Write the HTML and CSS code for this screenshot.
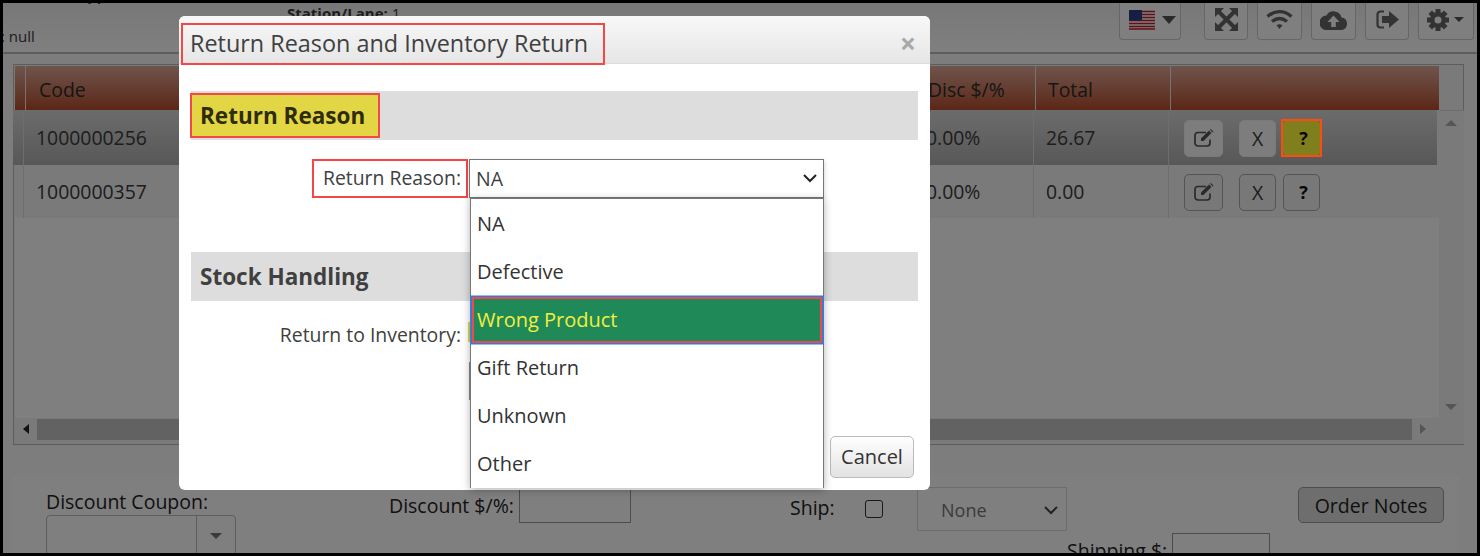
FILE: index.html
```html
<!DOCTYPE html>
<html>
<head>
    <title>Return Reason</title>
    <link rel="stylesheet" href="styles.css">
</head>
<body>
<div class="frame">
    <div class="topbar">
        <div class="top-left">
            <div class="top-clip">Cashier: pp</div>
            <div class="top-null">: null</div>
        </div>
        <div class="station"><b>Station/Lane:</b> 1</div>
        <div class="tools">
            <button class="tool tool-flag">
                <svg width="26" height="20" viewBox="0 0 26 20">
                    <rect width="26" height="20" fill="#fff"/>
                    <path d="M0 1.5h26M0 4.5h26M0 7.5h26M0 10.5h26M0 13.5h26M0 16.5h26M0 19h26" stroke="#c4202c" stroke-width="1.6"/>
                    <rect width="13" height="10.5" fill="#2a3f8c"/>
                </svg>
                <span class="caret"></span>
            </button>
            <button class="tool tool-expand">
                <svg width="23" height="23" viewBox="0 0 23 23" fill="#666">
                    <path d="M0 0h9L0 9zM23 0v9L14 0zM0 23v-9l9 9zM23 23h-9l9-9z"/>
                    <path d="M4 4l15 15M19 4L4 19" stroke="#666" stroke-width="4"/>
                </svg>
            </button>
            <button class="tool tool-wifi">
                <svg width="27" height="21" viewBox="0 0 27 21" fill="none" stroke="#666" stroke-width="3.4">
                    <path d="M1.5 7.5C9 1 18 1 25.5 7.5"/>
                    <path d="M6 12.5C11 8.5 16 8.5 21 12.5"/>
                    <path d="M10.5 16.2C12.5 14.8 14.5 14.8 16.5 16.2L13.5 20z" fill="#666" stroke="none"/>
                </svg>
            </button>
            <button class="tool tool-cloud">
                <svg width="27" height="20" viewBox="0 0 27 20">
                    <path d="M21.5 7.5A8 7.5 0 0 0 6.5 5.5 6 6.5 0 0 0 6 20h15.5a5.5 6.2 0 0 0 0-12.5z" fill="#666"/>
                    <path d="M13.5 5.5l6 6.500h-3.700v5h-4.600v-5H7.500z" fill="#fff"/>
                </svg>
            </button>
            <button class="tool tool-exit">
                <svg width="23" height="19" viewBox="0 0 23 19">
                    <path d="M8 1.500H4.500A3 3 0 0 0 1.500 4.500v10a3 3 0 0 0 3 3H8" fill="none" stroke="#666" stroke-width="2.200"/>
                    <path d="M13 1l10 8.500-10 8.500v-5H6V6h7z" fill="#666"/>
                </svg>
            </button>
            <button class="tool tool-gear">
                <svg width="22" height="22" viewBox="0 0 22 22">
                    <g fill="#666">
                        <rect x="8.500" y="0" width="5" height="22"/>
                        <rect x="8.500" y="0" width="5" height="22" transform="rotate(45 11 11)"/>
                        <rect x="8.500" y="0" width="5" height="22" transform="rotate(90 11 11)"/>
                        <rect x="8.500" y="0" width="5" height="22" transform="rotate(135 11 11)"/>
                    </g>
                    <circle cx="11" cy="11" r="6" fill="none" stroke="#666" stroke-width="4"/>
                    <circle cx="11" cy="11" r="3.500" fill="#fff"/>
                </svg>
                <span class="caret caret-small"></span>
            </button>
        </div>
    </div>

    <div class="grid-panel">
        <div class="grid-main">
            <div class="head-row">
                <div></div>
                <div>Code</div>
                <div>Disc $/%</div>
                <div>Total</div>
                <div></div>
            </div>
            <div class="row row-active">
                <div></div>
                <div>1000000256</div>
                <div>0.00%</div>
                <div>26.67</div>
                <div class="row-actions">
                    <button class="act act-plain act-edit">
                        <svg width="20" height="18" viewBox="0 0 20 18"><use href="#edit-icon"/></svg>
                    </button>
                    <button class="act act-plain act-x">X</button>
                    <button class="act act-q act-q-on">?</button>
                </div>
            </div>
            <div class="row">
                <div></div>
                <div>1000000357</div>
                <div>0.00%</div>
                <div>0.00</div>
                <div class="row-actions">
                    <button class="act act-edit">
                        <svg width="20" height="18" viewBox="0 0 20 18"><use href="#edit-icon"/></svg>
                    </button>
                    <button class="act act-x">X</button>
                    <button class="act act-q">?</button>
                </div>
            </div>
            <div class="grid-empty"></div>
        </div>
        <div class="vscroll">
            <span class="arrow arrow-up"></span>
            <span class="arrow arrow-down"></span>
        </div>
        <div class="hscroll">
            <span class="arrow arrow-left"></span>
            <div class="hthumb"></div>
            <span class="arrow arrow-right"></span>
        </div>
    </div>

    <div class="bottom-panel">
        <div class="coupon">
            <div>Discount Coupon:</div>
            <div class="combo"><span class="combo-btn"><span class="arrow arrow-down"></span></span></div>
        </div>
        <div class="discount">
            <label>Discount $/%:</label>
            <div class="text-box discount-box"></div>
        </div>
        <div class="ship">
            <label>Ship:</label>
            <span class="check"></span>
        </div>
        <div class="ship-select">
            None
            <svg width="14" height="9" viewBox="0 0 14 9" fill="none" stroke="#444" stroke-width="2"><path d="M1 1l6 6 6-6"/></svg>
        </div>
        <button class="notes-btn">Order Notes</button>
        <div class="shipping">
            <label>Shipping $:</label>
            <div class="text-box shipping-box"></div>
        </div>
    </div>

    <div class="backdrop"></div>
    <div class="mark-q"></div>

    <div class="modal">
        <div class="modal-head">
            <h3 class="modal-title">Return Reason and Inventory Return</h3>
            <span class="modal-close">×</span>
        </div>
        <div class="section-bar section-first"><span class="section-mark">Return Reason</span></div>
        <div class="form-row reason-row">
            <label class="form-label form-label-mark">Return Reason:</label>
            <div class="select-wrap">
                <div class="select-box">
                    NA
                    <svg width="14" height="9" viewBox="0 0 14 9" fill="none" stroke="#222" stroke-width="2"><path d="M1 1l6 6 6-6"/></svg>
                </div>
                <ul class="dropdown">
                    <li>NA</li>
                    <li>Defective</li>
                    <li class="picked">Wrong Product</li>
                    <li>Gift Return</li>
                    <li>Unknown</li>
                    <li>Other</li>
                </ul>
            </div>
        </div>
        <div class="section-bar section-stock"><span class="section-text">Stock Handling</span></div>
        <div class="form-row inventory-row">
            <label class="form-label">Return to Inventory:</label>
            <span class="inv-check"></span>
        </div>
        <div class="inv-select"></div>
        <div class="modal-foot">
            <button class="cancel-btn">Cancel</button>
        </div>
    </div>
</div>

<svg class="icon-defs" width="0" height="0">
    <symbol id="edit-icon" viewBox="0 0 20 18">
        <path d="M16 10.500V14a3 3 0 0 1-3 3H4a3 3 0 0 1-3-3V6.500a3 3 0 0 1 3-3h8" fill="none" stroke="#555" stroke-width="1.700"/>
        <path d="M7 9.500l8-8 2.500 2.500-8 8H7zM16 .8l.8-.8 2.700 2.700-.8.8z" fill="#555"/>
    </symbol>
</svg>
</body>
</html>
```

FILE: styles.css
```css
* {
    box-sizing: border-box;
}
body {
    margin: 0;
    font-family: "Open Sans", sans-serif;
    color: #3a3a3a;
}
button {
    font-family: inherit;
}
.frame {
    position: relative;
    width: 1480px;
    height: 556px;
    border: solid #000;
    border-width: 3px 3px 3px 3px;
    background: #fafafa;
    overflow: hidden;
}
.icon-defs {
    position: absolute;
}

/* top bar */
.topbar {
    display: flex;
    height: 51px;
    border-bottom: 2px solid #bbb;
    font-size: 15px;
    background: linear-gradient(#f0f0f0, #ffffff);
}
.top-left {
    width: 284px;
    flex: none;
}
.top-clip {
    margin: -18px 0 0 20px;
    height: 20px;
    font-weight: bold;
}
.top-null {
    margin: 21px 0 0 -2px;
}
.station {
    margin-top: 0;
}
.tools {
    display: flex;
    margin-left: auto;
    margin-right: 3px;
    align-items: flex-start;
}
.tool {
    display: flex;
    align-items: center;
    justify-content: center;
    height: 37px;
    padding: 0 0 3px;
    margin-left: 9px;
    background: #fff;
    border: 1px solid #ccc;
    border-top: 0;
    border-radius: 0 0 4px 4px;
}
.tool-flag {
    width: 62px;
    gap: 7px;
    padding-left: 4px;
    margin-right: 14px;
}
.tool-expand { width: 44px; }
.tool-wifi { width: 45px; }
.tool-cloud { width: 45px; }
.tool-exit { width: 44px; }
.tool-gear {
    width: 56px;
    gap: 5px;
    padding-right: 2px;
}
.caret {
    width: 0;
    height: 0;
    border-left: 7px solid transparent;
    border-right: 7px solid transparent;
    border-top: 8px solid #555;
}
.caret-small {
    border-left-width: 5px;
    border-right-width: 5px;
    border-top-width: 5px;
}

/* product grid */
.grid-panel {
    display: grid;
    grid-template-columns: 1fr 25px;
    grid-template-rows: 352px 26px;
    width: 1451px;
    height: 381px;
    margin: 10px 0 0 10px;
    border: 1px solid #bbb;
    padding: 1px 0 0 1px;
    background: #f4f4f4;
    font-size: 19.4px;
}
.grid-main {
    display: flex;
    flex-direction: column;
    width: 1424px;
}
.head-row,
.row {
    display: grid;
    grid-template-columns: 10px 1fr 120px 135px 269px;
}
.head-row {
    height: 44px;
    align-items: center;
    background: linear-gradient(#dea99a, #b84e2d);
    color: #2c2c2c;
}
.head-row > div {
    height: 100%;
    line-height: 47px;
    padding-left: 12px;
    border-left: 1px solid #e8e8e8;
}
.head-row > div:nth-child(2) {
    padding-left: 13px;
}
.head-row > div:first-child {
    border-left: 0;
    padding: 0;
}
.row {
    width: 1424px;
    margin-left: -2px;
    height: 53px;
    line-height: 54px;
}
.row > div {
    padding-left: 12px;
    border-left: 1px solid #dcdcdc;
}
.row > div:first-child {
    border-left: 0;
    padding: 0;
}
.row-active {
    height: 55px;
    line-height: 56px;
    background: linear-gradient(#d8d8d8, #b0b0b0);
}
.grid-empty {
    flex: 1;
    background: #ffffff;
}
.row-actions {
    display: flex;
    align-items: center;
    gap: 16px;
    padding-left: 15px !important;
}
.act {
    display: flex;
    align-items: center;
    justify-content: center;
    width: 39px;
    height: 37px;
    padding: 0;
    border: 1px solid #a8a8a8;
    border-radius: 5px;
    background: #f0f0f0;
    font-size: 19.4px;
    color: #3a3a3a;
}
.act-plain {
    border-color: #f4f4f4;
    background: #fafafa;
}
.act-x {
    width: 37px;
}
.act-q {
    width: 37px;
    margin-left: -9px;
    padding-left: 4px;
    font-size: 18px;
    font-weight: bold;
    color: #111;
}
.act-q-on {
    background: #ffff3c;
    border-color: #ffff3c;
}
.vscroll {
    position: relative;
    background: #f4f4f4;
    border-top: 1px solid #ddd;
    margin-top: 44px;
}
.vscroll .arrow-up {
    position: absolute;
    top: 9px;
    left: 6px;
}
.vscroll .arrow-down {
    position: absolute;
    bottom: 8px;
    left: 6px;
}
.hscroll {
    grid-column: 1 / 3;
    display: flex;
    align-items: center;
    padding: 0 0 4px 8px;
    gap: 8px;
    background: #f4f4f4;
}
.hthumb {
    width: 1375px;
    height: 21px;
    background: #c4c4c4;
}
.arrow {
    display: block;
    width: 0;
    height: 0;
}
.arrow-up {
    border-left: 6px solid transparent;
    border-right: 6px solid transparent;
    border-bottom: 6px solid #aaa;
}
.arrow-down {
    border-left: 6px solid transparent;
    border-right: 6px solid transparent;
    border-top: 6px solid #aaa;
}
.arrow-left {
    border-top: 5px solid transparent;
    border-bottom: 5px solid transparent;
    border-right: 6px solid #222;
}
.arrow-right {
    border-top: 5px solid transparent;
    border-bottom: 5px solid transparent;
    border-left: 6px solid #aaa;
}

/* totals and discount panel */
.bottom-panel {
    display: grid;
    grid-template-columns: 343px 401px 127px 381px 150px;
    grid-template-rows: 45px 40px;
    width: 1447px;
    height: 90px;
    margin: 30px 0 0 9px;
    padding: 12px 0 0 34px;
    background: #fff;
    font-size: 19.5px;
    color: #222;
}
.coupon {
    grid-row: 1 / 3;
    margin-top: 3px;
    line-height: 24px;
}
.combo {
    display: flex;
    justify-content: flex-end;
    width: 190px;
    height: 41px;
    margin-top: 1px;
    border: 1px solid #bbb;
    border-radius: 4px;
}
.combo-btn {
    display: flex;
    align-items: center;
    justify-content: center;
    width: 39px;
    border-left: 1px solid #bbb;
}
.combo-btn .arrow-down {
    border-top-color: #777;
}
.discount {
    display: flex;
    align-items: flex-start;
    gap: 5px;
    line-height: 36px;
}
.discount label {
    margin-top: 1px;
}
.text-box {
    border: 1px solid #999;
    background: #fff;
}
.discount-box {
    width: 112px;
    height: 34px;
    margin-top: 2px;
}
.ship {
    display: flex;
    align-items: flex-start;
    gap: 30px;
    line-height: 38px;
    margin-top: 2px;
}
.check {
    width: 18px;
    height: 18px;
    margin-top: 11px;
    border: 1.5px solid #333;
    border-radius: 3px;
}
.ship-select {
    display: flex;
    align-items: center;
    justify-content: space-between;
    width: 150px;
    height: 44px;
    padding: 2px 8px 0 23px;
    border: 1px solid #d8d8d8;
    font-size: 18px;
    color: #777;
}
.notes-btn {
    width: 146px;
    height: 36px;
    padding: 0;
    border: 1px solid #999;
    border-radius: 5px;
    background: #ddd;
    font-size: 19.5px;
    color: #222;
}
.shipping {
    grid-row: 2;
    grid-column: 4 / 6;
    display: flex;
    gap: 5px;
    margin-left: 150px;
    line-height: 38px;
}
.shipping-box {
    width: 98px;
    height: 40px;
    margin-top: 1px;
}

/* modal over the page */
.backdrop {
    position: absolute;
    inset: 0;
    background: rgba(0, 0, 0, 0.5);
}
.mark-q {
    position: absolute;
    left: 1278px;
    top: 116px;
    width: 41px;
    height: 38px;
    border: 2px solid #ff4a10;
}
.modal {
    position: absolute;
    left: 176px;
    top: 13px;
    width: 751px;
    height: 474px;
    background: #fff;
    border-radius: 6px;
    color: #404040;
}
.modal-head {
    display: flex;
    justify-content: space-between;
    height: 48px;
    padding: 7px 14px 0 2px;
    background: linear-gradient(#f8f8f8, #e6e6e6);
    border-radius: 6px 6px 0 0;
    border-bottom: 1px solid #ddd;
}
.modal-title {
    width: 424px;
    height: 42px;
    margin: 0;
    padding-left: 7px;
    border: 2px solid #f44848;
    font-size: 23.4px;
    font-weight: normal;
    line-height: 37px;
    white-space: nowrap;
}
.modal-close {
    font-size: 28px;
    font-weight: bold;
    line-height: 40px;
    color: #a8a8a8;
}
.section-bar {
    height: 49px;
    margin: 0 12px;
    background: #ddd;
    font-size: 22.5px;
    font-weight: bold;
    line-height: 49px;
}
.section-first {
    margin-top: 27px;
    padding-top: 2px;
}
.section-mark {
    display: block;
    width: 190px;
    height: 45px;
    margin-left: -1px;
    padding-left: 8px;
    border: 2px solid #f44848;
    background: #e2d645;
    line-height: 41px;
    color: #2e2c0a;
}
.section-text {
    padding-left: 9px;
}
.form-row {
    display: flex;
    font-size: 19.4px;
}
.form-label {
    width: 282px;
    text-align: right;
}
.reason-row {
    height: 39px;
    margin-top: 19px;
    padding-left: 7px;
}
.form-label-mark {
    margin-left: 126px;
    width: 156px;
    height: 39px;
    padding-right: 5px;
    border: 2px solid #f44848;
    line-height: 33px;
}
.select-wrap {
    position: relative;
    width: 355px;
    margin-left: 1px;
}
.select-box {
    display: flex;
    align-items: center;
    justify-content: space-between;
    height: 39px;
    padding: 0 6px 0 6px;
    border: 1px solid #777;
    box-shadow: 0 2px 5px rgba(0, 0, 0, 0.2);
    font-size: 19.5px;
}
.dropdown {
    position: absolute;
    top: 100%;
    left: 1px;
    z-index: 2;
    width: 354px;
    height: 290px;
    margin: 0;
    padding: 1px 0 0;
    list-style: none;
    background: #fff;
    border: solid #777;
    border-width: 1px 1px 0;
    box-shadow: 0 2px 8px rgba(0, 0, 0, 0.3);
    font-size: 20px;
}
.dropdown li {
    height: 48px;
    padding-left: 6px;
    line-height: 48px;
    color: #333;
}
.dropdown .picked {
    height: 46px;
    margin: 1px;
    padding-left: 3px;
    background: #1f8a58;
    border: 2px solid #f44848;
    box-shadow: 0 0 0 1.5px #2080f0;
    line-height: 42px;
    color: #f5ee3e;
}
.section-stock {
    margin-top: 54px;
}
.inventory-row {
    height: 20px;
    margin-top: 21px;
    line-height: 26px;
}
.inv-check {
    width: 3px;
    height: 20px;
    margin-left: 7px;
    background: #e2d645;
}
.inv-select {
    width: 2px;
    height: 38px;
    margin: 20px 0 0 290px;
    background: #888;
}
.modal-foot {
    display: flex;
    justify-content: flex-end;
    margin: 36px 16px 0 0;
}
.cancel-btn {
    width: 84px;
    height: 42px;
    padding: 0 0 2px;
    border: 1px solid #bbb;
    border-radius: 5px;
    background: linear-gradient(#fff, #e2e2e2);
    font-size: 20px;
    color: #333;
}
```
